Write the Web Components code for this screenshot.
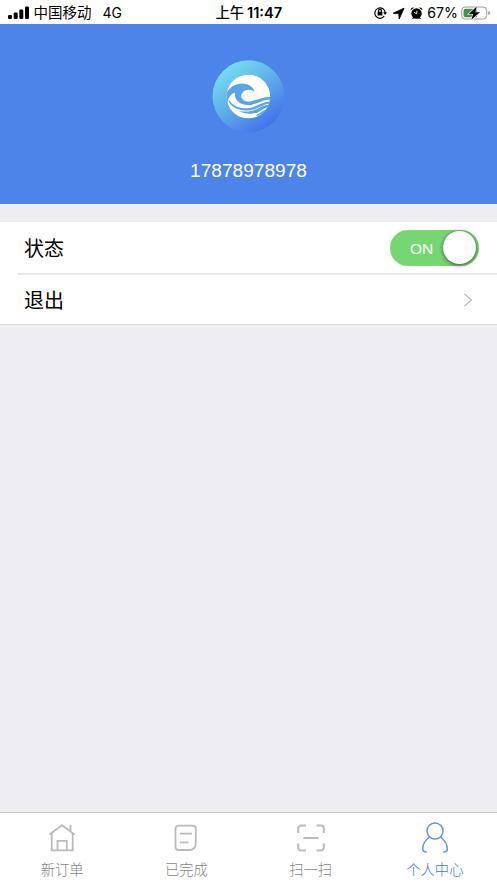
<!DOCTYPE html>
<html lang="zh-CN"><head><meta charset="utf-8"><title>个人中心</title>
<style>html,body{margin:0;height:100%}body{font-family:"Liberation Sans","Noto Sans CJK SC",sans-serif;background:#eeedf2;color:#000;overflow:hidden}</style></head>
<body><profile-page></profile-page>
<script>
const define=(name,html)=>customElements.define(name,class extends HTMLElement{
 constructor(){super();this.attachShadow({mode:'open'}).innerHTML=html}
});
define('status-bar',`<style>
:host{display:grid;grid-template-columns:1fr auto 1fr;height:24px;background:#fff;align-items:center;font:14.5px/24px Inter,"Noto Sans CJK SC",sans-serif;white-space:nowrap;box-sizing:border-box;padding:1px 6px 0 8px}
div{display:flex;align-items:center;height:23px}svg{display:block;flex:none}
.l span{margin-left:4.5px}.l .n{margin-left:11px;font-size:14px}
.t{gap:3px;font-weight:500;font-size:14.3px;margin-right:1.5px}.t b{font-weight:600;font-size:14.6px}
.r{justify-content:flex-end}.r span{margin:0 3px 0 4px;font-size:14.2px}
</style>
<div class="l"><svg width="21" height="14" viewBox="0 0 21 14"><rect y="9" width="4" height="4" rx="1.3"/><rect x="5.7" y="6.5" width="4" height="6.5" rx="1.3"/><rect x="11.3" y="3.5" width="4" height="9.5" rx="1.3"/><rect x="17" y=".5" width="4" height="12.5" rx="1.3"/></svg><span>中国移动</span><span class="n">4G</span></div>
<div class="t"><span>上午</span><b>11:47</b></div>
<div class="r"><svg width="50" height="16" viewBox="0 0 50 16"><g fill="none" stroke="#000" stroke-width="1.2"><path d="M11.2 11.2A5.2 5.2 0 1 1 12.2 8"/><path d="M5.5 7V5.8a1.5 1.5 0 0 1 3 0V7"/></g><path d="M4.6 6.8h4.8v3.8H4.6zM10.2 7.2h3.8l-1.9 2.7z"/><path d="M20.3 8.2 31 3.2 26.2 14 25.8 8.6z" stroke="#000" stroke-width=".9" stroke-linejoin="round"/><circle cx="43.5" cy="8.5" r="5.2"/><path d="M37.7 5.3a2.3 2.3 0 0 1 3.3-2.6zM49.3 5.3A2.3 2.3 0 0 0 46 2.7zM38.7 14.3l2-2.5 1.5 1.2zM48.3 14.3l-2-2.5-1.5 1.2z"/><path d="M43.8 5.8v3l-2.7-1.5" fill="none" stroke="#fff" stroke-width=".9"/></svg>
<span>67%</span><svg width="30" height="16" viewBox="0 0 30 16"><rect x=".7" y="2" width="25" height="12" rx="3.5" fill="#fff" stroke="#999"/><path d="M4.5 3.7H16v8.600H4.500a2 2 0 0 1-2-2V5.700a2 2 0 0 1 2-2z" fill="#3f9346"/><path d="M27.300 6.100q2 .5 2 2t-2 2z" fill="#999"/><path d="M15.800 1.500 7.600 9h4.500l-1.800 5.800 8.700-7.500h-4.600z" stroke="#fff" stroke-width="1.200" paint-order="stroke"/></svg></div>`);
define('profile-header',`<style>:host{display:flex;flex-direction:column;align-items:center;height:180px;box-sizing:border-box;padding-top:36px;background:#4c84e9;color:#fff}
svg{display:block;width:73px;height:73px}span{margin-top:25px;font-size:19.1px;line-height:26px}</style>
<svg viewBox="-37 -36 219 219"><defs><linearGradient id="g" x1=".15" y1=".05" x2=".8" y2=".95"><stop stop-color="#77e3f1"/><stop offset=".5" stop-color="#5eade9"/><stop offset="1" stop-color="#426eeb"/></linearGradient><clipPath id="c"><circle cx="72" cy="73.5" r="65.5"/></clipPath></defs>
<circle cx="72.5" cy="73" r="108" fill="url(#g)"/><circle cx="72" cy="73.5" r="65.5" fill="#fff"/>
<g clip-path="url(#c)" fill="#58a5e8"><path d="M3 68C16 42 42 30 64 36C80 40 89 50 91 60C80 51 66 52 56 60C46 70 50 84 65 88C90 92 110 71 150 76V83C115 79 102 97 73 99C45 100 29 83 32 62C19 65 10 78 9 95L0 98Z"/><path d="M14 84C27 104 51 112 76 108C102 103 115 85 150 89V95C120 90 106 110 77 114.500C47 119 22 107 12 87Z"/><path d="M44 116C65 122 89 117 104 108C116 101 128 97 148 99L145 104C122 104 114 115 99 122C80 127 58 126 44 116ZM97 128C111 122 117 112 139 109L128 120Q113 124 97 133Z"/></g></svg><span>17878978978</span>`);
define('toggle-switch',`<style>:host{display:flex;align-items:center;justify-content:space-between;width:89px;height:36px;border-radius:18px;background:#76d672;box-sizing:border-box;padding:0 3px 0 20px;color:#fff;font-size:15.5px}span{padding-top:2px}
i{display:block;width:33px;height:33px;border-radius:50%;background:#fff;box-shadow:0 1px 4px #0009}</style><span>ON</span><i></i>`);
define('list-row',`<style>:host{display:flex;height:51px;align-items:center;justify-content:space-between;padding:0 18px 0 24px;font-size:20px;line-height:30px;background:#fff}::slotted(span){padding-top:3px}</style><slot></slot>`);
define('tab-item',`<style>:host{display:flex;flex:1;flex-direction:column;align-items:center;color:#858585;font-size:14.3px;font-weight:300;line-height:20px;padding-top:8px}
:host([active]){color:#3c79e8}::slotted(svg){display:block;width:34px;height:34px;fill:none;stroke:#bbb;stroke-width:1.8}:host([active]) ::slotted(svg){stroke:#5d91ec;stroke-width:1.5}span{margin-top:5px}</style><slot name="icon"></slot><span><slot></slot></span>`);
define('profile-page',`<style>:host{display:flex;flex-direction:column;height:883px;width:497px}
.list{margin-top:18px;background:#fff;border-bottom:1px solid #d9d9dc}hr{border:0;height:2px;margin:0 0 0 18px;background:#e8e8ea}hr+list-row{height:49px}
nav{margin-top:auto;display:flex;height:70px;background:#fff;border-top:1px solid #c9c9cc}.arrow{width:10px;height:14px;margin-right:6px}</style>
<status-bar></status-bar><profile-header></profile-header>
<div class="list"><list-row><span>状态</span><toggle-switch></toggle-switch></list-row><hr><list-row><span>退出</span><svg class="arrow" viewBox="0 0 10 14" fill="none" stroke="#bbb" stroke-width="1.3"><path d="m1.5 1 7 6-7 6"/></svg></list-row></div>
<nav><tab-item><svg slot="icon" viewBox="0 0 34 34"><path d="M4.5 13.5 17 4.2l12.500 9.300M6.700 12v17.300h21V12M12.500 29V19.800h9.300V29M25.500 10V4"/></svg>新订单</tab-item>
<tab-item><svg slot="icon" viewBox="0 0 34 34"><path d="M9.5 4.700h14.300a3 3 0 0 1 3 3V22q0 7-7 7H9.500a3 3 0 0 1-3-3V7.700a3 3 0 0 1 3-3zM11 12.700h12M11 21.300h8.500"/></svg>已完成</tab-item>
<tab-item><svg slot="icon" viewBox="0 0 34 34" style="stroke-width:2.1"><path d="M12 4.500H7.200a3 3 0 0 0-3 3V12M22.500 4.500h4.300a3 3 0 0 1 3 3V12M4.200 22.500v4a3 3 0 0 0 3 3H12M29.800 22.500v4a3 3 0 0 1-3 3h-4.300M9.500 17h15"/></svg>扫一扫</tab-item>
<tab-item active><svg slot="icon" viewBox="0 0 34 34"><circle cx="17" cy="10" r="8"/><path d="M11.500 16Q4.700 21 4.700 28q0 3 4 3M22.500 16q6.800 5 6.800 12 0 3-4 3"/></svg>个人中心</tab-item></nav>`);
</script></body></html>
